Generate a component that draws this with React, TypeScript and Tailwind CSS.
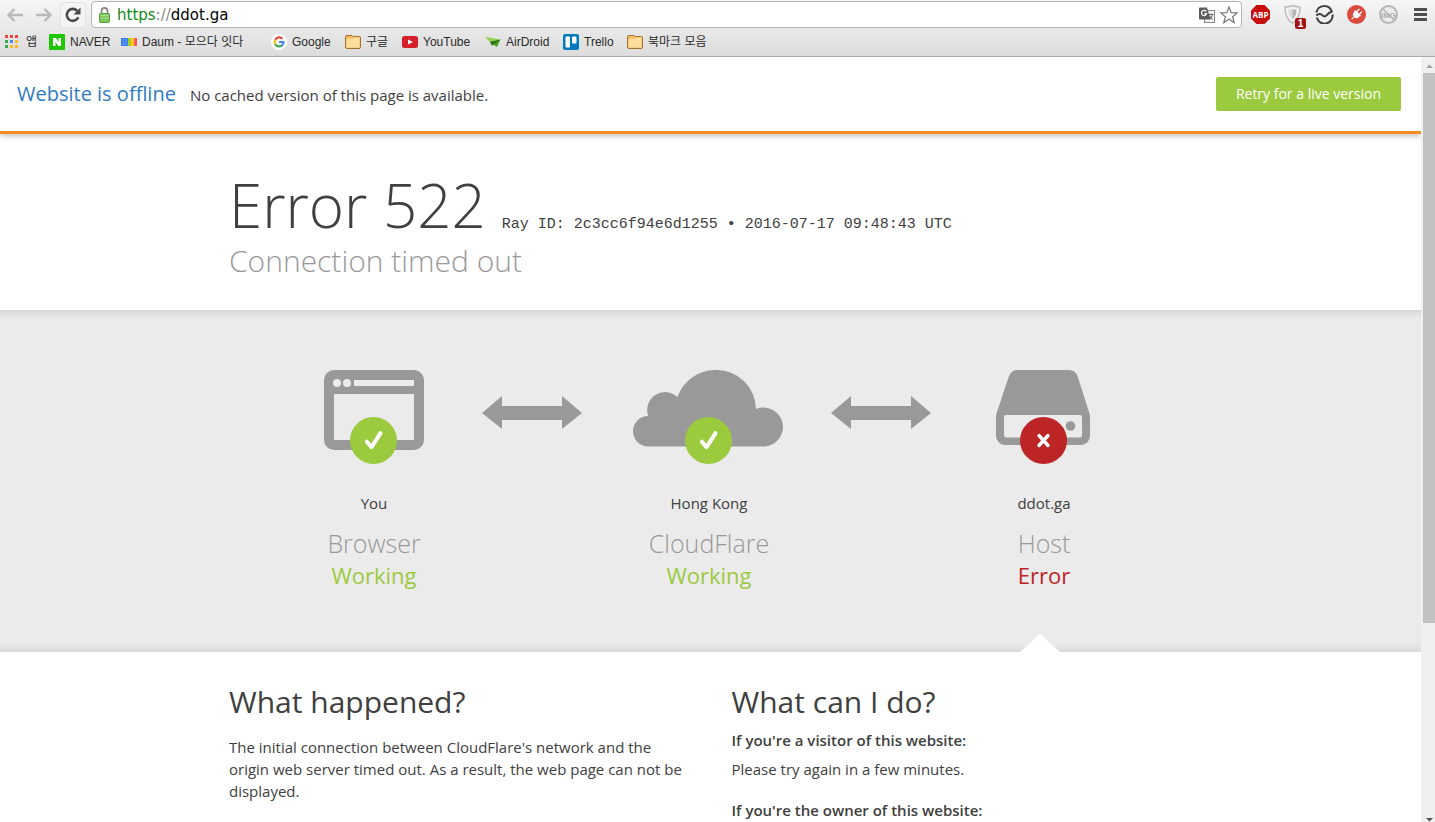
import React from "react";

const KR = "font-['Liberation_Sans','Noto_Sans_CJK_KR',sans-serif]";

function CheckBadge({ cx, cy }: { cx: number; cy: number }) {
  return (
    <g transform={`translate(${cx} ${cy})`}>
      <circle r="23.5" fill="#9bca3e" />
      <path d="M-6.6 1.2 L-2 6.6 L7 -7.4" fill="none" stroke="#fff" strokeWidth="4" strokeLinecap="round" strokeLinejoin="round" />
    </g>
  );
}

function BrowserIcon() {
  return (
    <svg width="100" height="94" viewBox="0 0 100 94" aria-hidden="true">
      <path fillRule="evenodd" fill="#999" d="M10 0H90A10 10 0 0 1 100 10V70A10 10 0 0 1 90 80H10A10 10 0 0 1 0 70V10A10 10 0 0 1 10 0ZM10 24V70H90V24ZM30 10V16H90V10Z" />
      <circle cx="13" cy="13" r="4" fill="#ebebeb" />
      <circle cx="23" cy="13" r="4" fill="#ebebeb" />
      <CheckBadge cx={49.5} cy={70.5} />
    </svg>
  );
}

function CloudIcon() {
  return (
    <svg width="152" height="94" viewBox="0 0 152 94" aria-hidden="true">
      <path fill="#999" d="M15.2 76.5A15.2 15.2 0 0 1 15.200 46.100A18 18 0 0 1 44.5 27A40 40 0 0 1 83 0A39.5 39.5 0 0 1 123 39A19.5 19.5 0 1 1 131.500 76.5Z" />
      <CheckBadge cx={75.5} cy={70.5} />
    </svg>
  );
}

function HostIcon() {
  return (
    <svg width="96" height="94" viewBox="0 0 96 94" aria-hidden="true">
      <path fillRule="evenodd" fill="#999" d="M21 0H73Q79 0 81.500 6L93 42Q94 44 94 47V66A9 9 0 0 1 85 75H9A9 9 0 0 1 0 66V47Q0 44 1 42L13 6Q15.500 0 21 0ZM10 45Q8 45 8 47V65Q8 67.500 10 67.500H84Q86 67.500 86 65V47Q86 45 84 45Z" />
      <circle cx="74.500" cy="56" r="4.800" fill="#999" />
      <g transform="translate(47.500 70.500)">
        <circle r="23.500" fill="#bd2426" />
        <path d="M-4.500 -5L4.500 5M4.500 -5L-4.500 5" stroke="#fff" strokeWidth="3.400" strokeLinecap="round" />
      </g>
    </svg>
  );
}

function ArrowIcon() {
  return (
    <svg width="100" height="33" viewBox="0 0 100 33" aria-hidden="true">
      <path fill="#999" d="M0 17L20 0V10H80V0L100 17L80 33V24H20V33Z" />
    </svg>
  );
}

type StatusProps = {
  icon: React.ReactNode;
  place: string;
  name: string;
  status: string;
  ok?: boolean;
  children?: React.ReactNode;
};

function StatusColumn({ icon, place, name, status, ok, children }: StatusProps) {
  return (
    <div className="relative flex flex-col items-center pt-[60px]">
      {icon}
      {children}
      <span className="mt-[27px] text-[15px] leading-6">{place}</span>
      <h3 className="mt-3 text-[25px] leading-8 font-light text-[#999]">{name}</h3>
      <span className={`text-[22px] leading-8 ${ok ? "text-[#9bca3e]" : "text-[#bd2426]"}`}>{status}</span>
    </div>
  );
}

function FolderIcon() {
  return (
    <svg width="16" height="16" viewBox="0 0 16 16">
      <path d="M.5 4V13Q.5 14.500 2 14.500H14Q15.500 14.500 15.500 13V3.500Q15.500 2.500 14.500 2.500H8L7 1.500H2Q.5 1.500 .5 3Z" fill="#f2c069" stroke="#a4712a" />
      <path d="M1.500 5H8L9.500 3.500H14.500V13.500H1.500Z" fill="#ffdf9e" />
    </svg>
  );
}

const bookmarks: { label: string; width: string; icon: React.ReactNode }[] = [
  {
    label: "앱",
    width: "w-[44px]",
    icon: (
      <svg width="16" height="16" viewBox="0 0 16 16">
        {["#e8453c", "#e8453c", "#e8453c", "#3aa757", "#4688f1", "#f9bb2d", "#3aa757", "#f9bb2d", "#f9bb2d"].map((c, i) => (
          <rect key={i} x={(i % 3) * 5} y={1 + Math.floor(i / 3) * 5} width="3" height="3" fill={c} />
        ))}
      </svg>
    ),
  },
  {
    label: "NAVER",
    width: "w-[72px]",
    icon: (
      <svg width="16" height="16" viewBox="0 0 16 16">
        <rect width="16" height="16" rx="1" fill="#1ec800" />
        <path d="M4 4H7L9.500 8V4H12V12H9.200L6.500 8V12H4Z" fill="#fff" />
      </svg>
    ),
  },
  {
    label: "Daum - 모으다 잇다",
    width: "w-[150px]",
    icon: (
      <svg width="16" height="16" viewBox="0 0 16 16">
        <rect y="4" width="16" height="8" fill="#3e7be0" />
        <rect x="1" y="5" width="5" height="6" fill="#4a8cff" />
        <rect x="7" y="4" width="3" height="8" fill="#a0d020" />
        <rect x="10" y="4" width="3" height="8" fill="#ffc41f" />
        <rect x="13" y="4" width="3" height="8" fill="#fb5a5a" />
      </svg>
    ),
  },
  {
    label: "Google",
    width: "w-[74px]",
    icon: (
      <svg width="16" height="16" viewBox="0 0 16 16">
        <circle cx="8" cy="8" r="8" fill="#fff" />
        <g fill="none" strokeWidth="2.200">
          <path d="M4.200 5.700A4.500 4.500 0 0 1 11.400 4.700" stroke="#ea4335" />
          <path d="M4.200 10.300A4.500 4.500 0 0 1 4.200 5.700" stroke="#fbbc05" />
          <path d="M11 11.400A4.500 4.500 0 0 1 4.200 10.300" stroke="#34a853" />
          <path d="M8 8H12.500A4.500 4.500 0 0 1 11 11.400" stroke="#4285f4" />
        </g>
      </svg>
    ),
  },
  { label: "구글", width: "w-[57px]", icon: <FolderIcon /> },
  {
    label: "YouTube",
    width: "w-[83px]",
    icon: (
      <svg width="16" height="16" viewBox="0 0 16 16">
        <rect y="2" width="16" height="12" rx="2.500" fill="#d3202a" />
        <path d="M6 5.500L11 8L6 10.500Z" fill="#fff" />
      </svg>
    ),
  },
  {
    label: "AirDroid",
    width: "w-[78px]",
    icon: (
      <svg width="16" height="16" viewBox="0 0 16 16">
        <path d="M0 3L15.500 5.500L5 8Z" fill="#8fd14b" />
        <path d="M5 8L15.500 5.500L12 13L8 10.500Z" fill="#4a9d22" />
        <path d="M5 8L7 12L8 10.500L15.500 5.500Z" fill="#2f6f18" />
      </svg>
    ),
  },
  {
    label: "Trello",
    width: "w-[64px]",
    icon: (
      <svg width="16" height="16" viewBox="0 0 16 16">
        <rect width="16" height="16" rx="2" fill="#0079bf" />
        <rect x="2.500" y="2.500" width="4.500" height="11" rx="1" fill="#fff" />
        <rect x="9" y="2.500" width="4.500" height="7" rx="1" fill="#fff" />
      </svg>
    ),
  },
  { label: "북마크 모음", width: "w-[90px]", icon: <FolderIcon /> },
];

function NavArrow({ flip }: { flip?: boolean }) {
  return (
    <svg width="16" height="14" viewBox="0 0 16 14" fill="none" stroke="#b9b9b9" strokeWidth="2.400">
      <path d={flip ? "M0 7H14M8.500 1L14.500 7L8.500 13" : "M16 7H2M7.500 1L1.500 7L7.500 13"} />
    </svg>
  );
}

function Toolbar() {
  return (
    <div className="flex h-[29px] items-center">
      <button aria-label="Back" className="ml-[7px]"><NavArrow /></button>
      <button aria-label="Forward" className="ml-[13px]"><NavArrow flip /></button>
      <button aria-label="Reload" className="ml-2 flex h-[26px] w-[26px] items-center justify-center rounded-sm border border-[#e2e2e2] bg-[#f4f4f4]">
        <svg width="16" height="16" viewBox="0 0 16 16">
          <path d="M13.300 10.300A6 6 0 1 1 12.200 3.800" fill="none" stroke="#4a4a4a" strokeWidth="2.600" />
          <path d="M15.500 .5V7.500H8.500Z" fill="#4a4a4a" />
        </svg>
      </button>
      <div className="ml-[5px] flex h-[27px] min-w-0 flex-1 items-center rounded-sm border border-[#b4b4b4] bg-white pr-[3px] pl-[7px] font-['DejaVu_Sans',sans-serif] text-[15px] leading-6">
        <svg width="11" height="16" viewBox="0 0 11 16" className="shrink-0">
          <path d="M2.500 8V4A3 3 0 0 1 8.500 4V8" fill="none" stroke="#8d8d8d" strokeWidth="1.800" />
          <rect x=".5" y="6.500" width="10" height="9" rx="1" fill="#7fc75f" stroke="#56a03a" />
          <path d="M1.500 8.500H9.500M1.500 11H9.500" stroke="#a9dd90" />
        </svg>
        <label htmlFor="address" className="ml-[7px] text-[#8a8a8a]">
          <span className="text-[#128a12]">https</span>://
        </label>
        <input id="address" defaultValue="ddot.ga" className="min-w-0 flex-1 bg-transparent text-black outline-none" />
        <button aria-label="Translate" className="mr-[5px]">
          <svg width="16" height="16" viewBox="0 0 16 16">
            <rect x="5.500" y="3.500" width="10" height="12" fill="#f2f2f2" stroke="#8a8a8a" />
            <path d="M0 1.500Q0 .5 1 .5H8L11.500 12.500H1Q0 12.500 0 11.500Z" fill="#5c5c5c" />
            <path d="M7.300 4.600A2.600 2.600 0 1 0 7.600 6.700H5.500" fill="none" stroke="#fff" strokeWidth="1.200" />
            <path d="M9.500 7.500H14.500M12 6.500V7.500M13.500 7.500Q13 10.500 10.500 12.500M10.500 8.500Q11.500 11 14 12.500" fill="none" stroke="#666" />
          </svg>
        </button>
        <button aria-label="Bookmark this page">
          <svg width="18" height="18" viewBox="0 0 18 18">
            <path d="M9 1L11.200 6.600L17.200 6.900L12.600 10.700L14.200 16.600L9 13.300L3.800 16.600L5.400 10.700L.8 6.900L6.800 6.600Z" fill="#fff" stroke="#777" strokeWidth="1.200" />
          </svg>
        </button>
      </div>
      <div className="flex items-center gap-[13px] pr-[8px] pl-[9px]">
        <button aria-label="Adblock Plus">
          <svg width="19" height="19" viewBox="0 0 19 19">
            <path d="M5.500 0H13.500L19 5.500V13.500L13.500 19H5.500L0 13.500V5.500Z" fill="#c70d0d" />
            <text x="9.500" y="12.500" textAnchor="middle" fontSize="8" fontWeight="700" fill="#fff" className="font-['Open_Sans',sans-serif]">ABP</text>
          </svg>
        </button>
        <button aria-label="Shield" className="relative">
          <svg width="19" height="19" viewBox="0 0 19 19">
            <path d="M2 2Q6 2 9.500 .8Q13 2 17 2Q17.500 13 9.500 18Q1.500 13 2 2Z" fill="#f3f3f3" stroke="#bdbdbd" strokeWidth="1.500" />
            <path d="M5.500 4.500Q8 4.500 9.500 4V14.500Q5.500 11 5.500 4.500Z" fill="#d8d8d8" />
            <path d="M9.500 4Q11 4.500 13.500 4.500Q13.500 11 9.500 14.500Z" fill="#b5b5b5" />
          </svg>
          <span className="absolute top-[13px] left-[12px] flex h-[11px] w-[11px] items-center justify-center rounded-[2px] bg-[#a31515] text-[10px] leading-none font-bold text-white">1</span>
        </button>
        <button aria-label="Mask">
          <svg width="19" height="19" viewBox="0 0 19 19" fill="none" stroke="#3d3d3d" strokeWidth="2">
            <path d="M1.400 7.500A8 8 0 0 1 16.800 6.500Q13.500 8 11.500 10.300Q9.500 12.500 7.500 10.300Q5 7.500 1.200 10.500M1.800 12.500A8 8 0 0 0 17.500 9.500" />
          </svg>
        </button>
        <button aria-label="Plug">
          <svg width="19" height="19" viewBox="0 0 19 19">
            <circle cx="9.500" cy="9.500" r="9.500" fill="#db4a3c" />
            <g transform="rotate(45 9.500 9.500)" fill="#fff">
              <path d="M5.500 7H13.500V8.200H13V10.500Q12.500 13 9.500 13Q6.500 13 6 10.500V8.200H5.500Z" />
              <path d="M7 3.500H8.300V7H7ZM10.700 3.500H12V7H10.700ZM9 13H10V16.500H9Z" />
            </g>
          </svg>
        </button>
        <button aria-label="Image blocker">
          <svg width="19" height="19" viewBox="0 0 19 19">
            <circle cx="9.500" cy="9.500" r="8.500" fill="#ececec" stroke="#b5b5b5" strokeWidth="1.800" />
            <text x="9.500" y="12.800" textAnchor="middle" fontSize="8" fontWeight="700" fill="#aaa">IMG</text>
            <path d="M3.500 3.500L15.500 15.500" stroke="#b5b5b5" strokeWidth="1.500" />
          </svg>
        </button>
        <button aria-label="Menu" className="ml-[3px]">
          <svg width="13" height="13" viewBox="0 0 13 13" stroke="#4f4f4f" strokeWidth="3">
            <path d="M0 1.500H13M0 6.500H13M0 11.500H13" />
          </svg>
        </button>
      </div>
    </div>
  );
}

export default function App() {
  return (
    <div className="flex h-screen flex-col overflow-hidden bg-white">
      <header className={`h-[57px] shrink-0 border-b border-[#a9a9a9] bg-linear-to-b from-[#f6f6f6] to-[#dcdcdc] ${KR}`}>
        <Toolbar />
        <nav className="flex h-[26px] items-center pl-[5px]">
          {bookmarks.map((b) => (
            <a key={b.label} href="#" className={`flex shrink-0 items-center gap-[5px] text-xs whitespace-nowrap text-[#2a2a2a] ${b.width}`}>
              <span className="shrink-0">{b.icon}</span>
              {b.label}
            </a>
          ))}
        </nav>
      </header>

      <div className="flex min-h-0 flex-1">
        <div className="min-w-0 flex-1 overflow-hidden font-['Open_Sans',sans-serif] text-[15px] text-[#404040]">
          <div className="relative flex items-center justify-between border-b-3 border-[#f68b1f] py-5 pr-5 pl-[17px] shadow-[0_2px_6px_rgba(0,0,0,0.25)]">
            <div className="flex items-baseline gap-[14px]">
              <h1 className="text-xl leading-[34px] text-[#2f7bbf]">Website is offline</h1>
              <p>No cached version of this page is available.</p>
            </div>
            <button className="h-[34px] rounded-xs bg-[#9bca3e] px-5 text-sm text-white">Retry for a live version</button>
          </div>

          <div className="mx-auto max-w-[1007px] px-[22px] pt-[35px] pb-[31px]">
            <div className="flex flex-wrap items-baseline gap-x-4">
              <h2 className="text-[60px] leading-[72px] font-light">Error 522</h2>
              <span className="font-['Liberation_Mono',monospace] text-[15px]">Ray ID: 2c3cc6f94e6d1255 • 2016-07-17 09:48:43 UTC</span>
            </div>
            <p className="mt-[2px] text-[30px] leading-9 font-light text-[#999]">Connection timed out</p>
          </div>

          <section className="bg-[#ebebeb] shadow-[inset_0_10px_10px_-8px_rgba(0,0,0,0.12),inset_0_-10px_10px_-8px_rgba(0,0,0,0.12)]">
            <div className="mx-auto grid h-[342px] max-w-[1008px] grid-cols-3 pr-[3px]">
              <StatusColumn icon={<BrowserIcon />} place="You" name="Browser" status="Working" ok>
                <div className="absolute top-[86px] -right-[40px]"><ArrowIcon /></div>
              </StatusColumn>
              <StatusColumn icon={<CloudIcon />} place="Hong Kong" name="CloudFlare" status="Working" ok>
                <div className="absolute top-[86px] -right-[54px]"><ArrowIcon /></div>
              </StatusColumn>
              <StatusColumn icon={<HostIcon />} place="ddot.ga" name="Host" status="Error">
                <svg className="absolute bottom-0 left-[143px]" width="40" height="18" viewBox="0 0 40 18" aria-hidden="true">
                  <path d="M0 18L20 0L40 18Z" fill="#fff" />
                </svg>
              </StatusColumn>
            </div>
          </section>

          <div className="mx-auto grid max-w-[1007px] grid-cols-2 gap-x-[44px] pt-8 pr-6 pl-[22px]">
            <section>
              <h2 className="text-[30px] leading-9">What happened?</h2>
              <p className="mt-4 leading-[22px]">
                The initial connection between CloudFlare's network and the origin web server timed out. As a result, the web page can not be displayed.
              </p>
            </section>
            <section>
              <h2 className="text-[30px] leading-9">What can I do?</h2>
              <h3 className="mt-[9px] leading-[22px] font-semibold">If you're a visitor of this website:</h3>
              <p className="mt-[7px] leading-[22px]">Please try again in a few minutes.</p>
              <h3 className="mt-[19px] leading-[22px] font-semibold">If you're the owner of this website:</h3>
            </section>
          </div>
        </div>

        <div className="flex w-[14px] shrink-0 flex-col items-end bg-[#f0f0f0]" aria-hidden="true">
          <svg width="12" height="16" viewBox="0 0 12 16" className="shrink-0">
            <path d="M3 11L6.500 7.500L10 11Z" fill="#a3a3a3" />
          </svg>
          <div className="w-3 flex-3 bg-[#c1c1c1]" />
          <div className="flex-1" />
          <svg width="12" height="16" viewBox="0 0 12 16" className="shrink-0">
            <path d="M3 12L6.500 15.500L10 12Z" fill="#505050" />
          </svg>
        </div>
      </div>
    </div>
  );
}
